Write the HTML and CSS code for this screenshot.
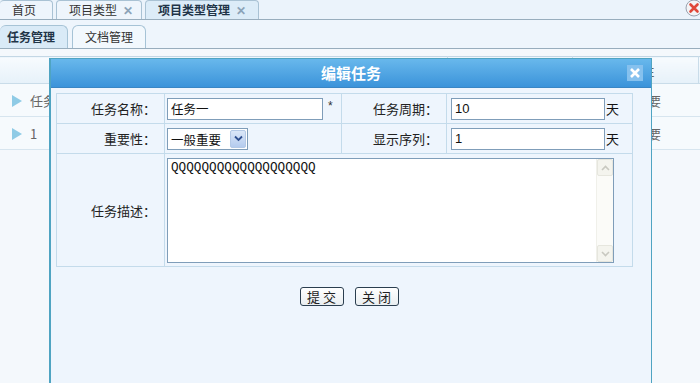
FILE: index.html
```html
<!DOCTYPE html>
<html lang="zh-CN">
<head>
<meta charset="utf-8">
<title>编辑任务</title>
<link rel="stylesheet" href="styles.css">
</head>
<body>
<div class="page">
  <div class="topbar">
    <div class="tab first">首页</div>
    <div class="tab">项目类型 <span class="tx">✕</span></div>
    <div class="tab active">项目类型管理 <span class="tx">✕</span></div>
    <svg class="closeall" width="18" height="18" viewBox="0 0 18 18">
      <circle cx="9" cy="9" r="8" fill="#f4f4f6" stroke="#9aa3b0" stroke-width="1"/>
      <path d="M5.5 5.5 L12.5 12.5 M12.5 5.5 L5.5 12.5" stroke="#e0483a" stroke-width="2.6" stroke-linecap="round"/>
    </svg>
  </div>
  <div class="subbar">
    <div class="stab active">任务管理</div>
    <div class="stab">文档管理</div>
  </div>
  <table class="grid">
    <colgroup><col class="c1"><col class="c2"><col class="c3"><col class="c4"></colgroup>
    <tr class="ghead"><th>任务名称</th><th>任务周期</th><th>重要性</th><th></th></tr>
    <tr class="grow"><td><span class="tri"></span>任务一</td><td>10</td><td class="ctr">一般重要</td><td></td></tr>
    <tr class="grow"><td><span class="tri"></span>1</td><td>2</td><td class="ctr">一般重要</td><td></td></tr>
  </table>
</div>

<div class="dialog">
  <div class="dtitle">编辑任务
    <span class="dclose">
      <svg width="14" height="14" viewBox="0 0 14 14"><path d="M3 3 L11 11 M11 3 L3 11" stroke="#ffffff" stroke-width="2.6"/></svg>
    </span>
  </div>
  <div class="dbody">
    <table class="form">
      <colgroup><col class="f1"><col class="f2"><col class="f3"><col class="f4"></colgroup>
      <tr class="r1">
        <td class="lbl">任务名称：</td>
        <td class="fld"><input class="inp w155" type="text" value="任务一"><span class="req">*</span></td>
        <td class="lbl">任务周期：</td>
        <td class="fld2"><input class="inp w154 num" type="text" value="10"><span class="unit">天</span></td>
      </tr>
      <tr class="r1">
        <td class="lbl">重要性：</td>
        <td class="fld">
          <div class="sel"><select><option>一般重要</option></select><span class="arr"><svg width="9" height="7" viewBox="0 0 9 7"><path d="M1 1.5 L4.5 5 L8 1.5" fill="none" stroke="#2f4f8f" stroke-width="1.8"/></svg></span></div>
        </td>
        <td class="lbl">显示序列：</td>
        <td class="fld2"><input class="inp w154 num" type="text" value="1"><span class="unit">天</span></td>
      </tr>
      <tr class="r3">
        <td class="lbl">任务描述：</td>
        <td class="fld" colspan="3">
          <div class="ta">
            <textarea>QQQQQQQQQQQQQQQQQQQ</textarea>
            <div class="sbar">
              <span class="sbtn"><svg width="9" height="6" viewBox="0 0 9 6"><path d="M1 5 L4.5 1.5 L8 5" fill="none" stroke="#c8c8c0" stroke-width="1.6"/></svg></span>
              <span class="strack"></span>
              <span class="sbtn"><svg width="9" height="6" viewBox="0 0 9 6"><path d="M1 1 L4.5 4.5 L8 1" fill="none" stroke="#c8c8c0" stroke-width="1.6"/></svg></span>
            </div>
          </div>
        </td>
      </tr>
    </table>
    <div class="btns">
      <button class="btn">提 交</button>
      <button class="btn">关 闭</button>
    </div>
  </div>
</div>
</body>
</html>
```

FILE: styles.css
```css
* { box-sizing: border-box; }
html, body { margin: 0; padding: 0; }
body {
  width: 700px;
  height: 383px;
  overflow: hidden;
  background: #f4f8fc;
  font-family: "Noto Sans CJK SC", "Liberation Sans", sans-serif;
  font-size: 12px;
  color: #222;
  position: relative;
}
.page { width: 700px; }

/* top tab bar */
.topbar {
  height: 20px;
  display: flex;
  align-items: flex-end;
  background: #ebf3fb;
  border-bottom: 1px solid #98adbd;
}
.tab {
  height: 19px;
  line-height: 18px;
  font-size: 12px;
  color: #333;
  padding: 0 10px 0 12px;
  border: 1px solid #a9c2d4;
  border-bottom: none;
  border-radius: 4px 4px 0 0;
  margin-right: 3px;
  background: #eef5fc;
  white-space: nowrap;
}
.tab.first { border-left: none; padding-left: 12px; width: 53px; }
.tab:nth-child(2) { width: 86px; padding-left: 12px; }
.tab.active {
  background: #dcecf8;
  font-weight: bold;
  color: #1f3447;
  width: 114px;
  padding-left: 12px;
}
.tx { color: #8ba3b8; font-weight: bold; font-size: 12px; margin-left: 3px; }
.closeall { margin-left: auto; margin-right: -3px; align-self: flex-start; margin-top: -1px; }

/* sub tabs */
.subbar {
  height: 29px;
  display: flex;
  align-items: flex-end;
  gap: 4px;
  background: #eef5fc;
  border-bottom: 1px solid #98adbd;
}
.stab {
  height: 23px;
  line-height: 22px;
  font-size: 12px;
  padding: 0 12px;
  border: 1px solid #a6c3d6;
  border-bottom: none;
  border-radius: 6px 6px 0 0;
  color: #333;
  background: #f2f8fd;
}
.stab.active {
  background: #d9eaf7;
  font-weight: bold;
  color: #1f3447;
  border-left: none;
  padding-left: 7px;
  width: 68px;
}

/* background grid */
.grid {
  margin-top: 7px;
  width: 700px;
  border-collapse: collapse;
  table-layout: fixed;
  color: #666;
  font-size: 13px;
}
.grid .c1 { width: 447px; }
.grid .c2 { width: 125px; }
.grid .c3 { width: 126px; }
.grid .c4 { width: 2px; }
.ghead th {
  height: 27px;
  font-weight: normal;
  background: linear-gradient(#f7fbfe, #e6f1f9);
  border-top: 1px solid #c3d7e5;
  border-bottom: 1px solid #c9dce9;
  border-right: 1px solid #c9dce9;
  padding: 0;
  text-align: center;
}
.grow td {
  height: 33px;
  border-bottom: 1px solid #d7e5ef;
  padding: 0;
  background: #f6fafd;
  white-space: nowrap;
}
.grow td:first-child { padding-left: 12px; }
.grow td.ctr { text-align: center; }
.tri {
  display: inline-block;
  width: 0; height: 0;
  border-top: 6px solid transparent;
  border-bottom: 6px solid transparent;
  border-left: 10px solid #8fcbe6;
  margin-right: 8px;
  vertical-align: -1px;
}

/* dialog */
.dialog {
  position: absolute;
  left: 49px;
  top: 58px;
  width: 603px;
  height: 340px;
  background: #eef5fd;
  border: 1px solid #4fa4c2;
  border-left-width: 2px;
}
.dtitle {
  position: relative;
  height: 29px;
  line-height: 28px;
  text-align: center;
  color: #fff;
  font-weight: bold;
  font-size: 15px;
  background: linear-gradient(#68b8ec, #3b93da);
  border-bottom: 1px solid #3a86c4;
}
.dclose {
  position: absolute;
  right: 8px;
  top: 6px;
  width: 16px;
  height: 16px;
  background: #86c1ee;
  display: flex;
  align-items: center;
  justify-content: center;
}
.dbody { padding: 5px 18px 0 5px; }
.form {
  width: 576px;
  border-collapse: collapse;
  table-layout: fixed;
  font-size: 13px;
}
.form .f1 { width: 108px; }
.form .f2 { width: 177px; }
.form .f3 { width: 105px; }
.form .f4 { width: 186px; }
.form td {
  border: 1px solid #c4dbeb;
  padding: 0;
  vertical-align: middle;
}
.r1 td { height: 30px; }
.r3 td { height: 113px; }
.lbl { text-align: right; padding-right: 8px !important; color: #222; }
.fld { padding-left: 2px !important; white-space: nowrap; }
.fld2 { padding-left: 4px !important; white-space: nowrap; }
.inp {
  height: 22px;
  border: 1px solid #7f9db9;
  background: #fff;
  padding: 0 3px;
  font-family: "Noto Sans CJK SC", "Liberation Sans", sans-serif;
  font-size: 12.5px;
  color: #111;
  vertical-align: middle;
  outline: none;
}
.inp.num { font-family: "Liberation Sans", sans-serif; font-size: 13px; }
.w155 { width: 156px; }
.w154 { width: 154px; }
.req { font-family: "Liberation Sans", sans-serif; font-size: 12px; margin-left: 5px; vertical-align: 2px; color: #333; }
.unit { font-size: 13px; color: #111; vertical-align: middle; margin-left: 1px; }

.sel {
  display: inline-flex;
  width: 81px;
  height: 22px;
  border: 1px solid #7f9db9;
  background: #fff;
  vertical-align: middle;
  padding: 1px;
}
.sel select {
  appearance: none;
  -webkit-appearance: none;
  flex: 1;
  min-width: 0;
  border: none;
  background: #fff;
  font-family: "Noto Sans CJK SC", sans-serif;
  font-size: 12.5px;
  color: #111;
  padding: 0 2px;
  outline: none;
}
.arr {
  width: 16px;
  height: 18px;
  border: 1px solid #b4c9e6;
  border-radius: 2px;
  background: linear-gradient(#dbe7f8, #b4cbee);
  display: flex;
  align-items: center;
  justify-content: center;
}

.ta {
  display: flex;
  width: 447px;
  height: 105px;
  margin-top: 1px;
  border: 1px solid #7f9db9;
  background: #fff;
}
.ta textarea {
  flex: 1;
  border: none;
  resize: none;
  outline: none;
  padding: 1px 3px;
  font-family: "Liberation Mono", monospace;
  font-size: 12.7px;
  line-height: 16px;
  color: #111;
  background: #fff;
}
.sbar {
  width: 17px;
  display: flex;
  flex-direction: column;
  background: #fbfbf8;
  border-left: 1px solid #f0f0ea;
}
.sbtn {
  height: 17px;
  border: 1px solid #e6e6de;
  border-radius: 2px;
  background: #f4f4ee;
  display: flex;
  align-items: center;
  justify-content: center;
}
.strack { flex: 1; }

.btns {
  display: flex;
  justify-content: center;
  gap: 11px;
  margin-top: 20px;
  padding-left: 9px;
}
.btn {
  width: 44px;
  height: 19px;
  padding: 0;
  border: 1px solid #2b3e4f;
  border-radius: 3px;
  background: linear-gradient(#ffffff, #e9eef1);
  font-family: "Noto Sans CJK SC", sans-serif;
  font-size: 13px;
  line-height: 16px;
  color: #222;
}
```
